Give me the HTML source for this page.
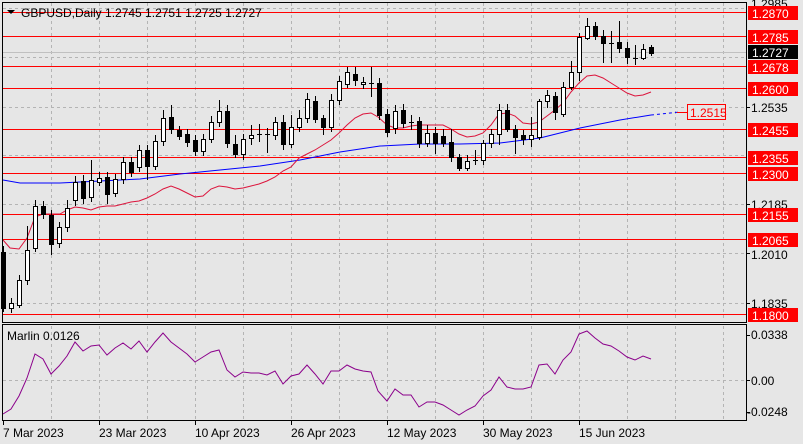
<!DOCTYPE html>
<html><head><meta charset="utf-8"><style>
html,body{margin:0;padding:0;background:#e6e6e6;width:803px;height:444px;overflow:hidden}
svg{display:block;font-family:"Liberation Sans",sans-serif}
</style></head><body>
<svg width="803" height="444" viewBox="0 0 803 444" xmlns="http://www.w3.org/2000/svg">
<rect width="803" height="444" fill="#e6e6e6"/>
<g stroke="#b4b4b4" stroke-dasharray="3,3" stroke-width="1">
<path d="M51.5 3V320M99.5 3V320M147.5 3V320M195.5 3V320M243.5 3V320M291.5 3V320M339.5 3V320M387.5 3V320M435.5 3V320M483.5 3V320M531.5 3V320M579.5 3V320M627.5 3V320M675.5 3V320M723.5 3V320"/>
<path d="M51.5 326V420M99.5 326V420M147.5 326V420M195.5 326V420M243.5 326V420M291.5 326V420M339.5 326V420M387.5 326V420M435.5 326V420M483.5 326V420M531.5 326V420M579.5 326V420M627.5 326V420M675.5 326V420M723.5 326V420"/>
<path d="M3 8.5H746M3 57.5H746M3 107.5H746M3 155.5H746M3 204.5H746M3 253.5H746M3 303.5H746M3 380.5H746"/>
</g>
<line x1="3" y1="52.5" x2="746" y2="52.5" stroke="#c0c0c0"/>
<g stroke="#ff0000" stroke-width="1">
<path d="M3 12.5H746M3 36.5H746M3 66.5H746M3 88.5H746M3 129.5H746M3 157.5H746M3 173.5H746M3 214.5H746M3 239.5H746M3 314.5H746"/>
</g>
<polyline fill="none" stroke="#0000ff" stroke-width="1" points="3,180 20,183 60,183 100,181 140,179 180,174 220,170 260,166 300,160 340,152 380,146 420,144 460,144 500,143 540,138 580,128 620,120 651,115"/>
<polyline fill="none" stroke="#0000ff" stroke-width="1" stroke-dasharray="3,3" points="651,115 680,112"/>
<polyline fill="none" stroke="#dc143c" stroke-width="1" points="3,240 10,248 19,249 27,238 35,217 43,214 51,214 60,214 67,210 75,207 83,208 91,210 99,207 107,206 115,206 123,204 131,202 139,201 147,198 155,194 163,189 171,186 179,189 187,193 195,197 203,196 211,189 219,186 227,187 235,189 243,188 251,186 259,184 267,181 275,177 283,171 291,167 299,158 307,154 315,150 323,145 331,140 339,133 347,125 355,118 363,114 371,113 378,117 387,125 395,128 403,128 411,126 419,125 427,125 435,125 443,125 451,129 459,134 467,137 475,136 483,133 491,125 499,114 507,113 515,116 523,123 531,124 539,122 547,116 555,110 563,103 571,92 579,83 587,76 595,75 603,78 611,83 619,88 627,93 635,96 643,95 651,92"/>
<g stroke="#000" stroke-width="1">
<path d="M3.5 246V312M11.5 298V313M19.5 275V308M27.5 226V285M35.5 200V252M43.5 201V219M51.5 210V255M59.5 222V248M67.5 200V232M75.5 176V206M83.5 175V204M91.5 160V202M99.5 172V186M107.5 172V204M115.5 174V197M123.5 157V184M131.5 157V177M139.5 145V172M147.5 145V180M155.5 135V170M163.5 110V146M171.5 105V134M179.5 126V140M187.5 129V147M195.5 135V156M203.5 134V156M211.5 116V143M219.5 100V127M227.5 105V148M235.5 135V158M243.5 134V160M251.5 125V145M259.5 124V142M267.5 128V153M275.5 117V140M283.5 115V150M291.5 115V148M299.5 110V132M307.5 93V123M315.5 96V123M323.5 115V135M331.5 94V132M339.5 76V105M347.5 67V88M355.5 67V86M363.5 77V89M371.5 67V97M379.5 78V120M387.5 109V137M395.5 105V134"/>
<path d="M403.5 104V128M411.5 115V130M419.5 117V148M427.5 125V147M435.5 127V154M443.5 129V147M451.5 129V162M459.5 154V171M467.5 155V171M475.5 150V165M483.5 140V165M491.5 129V148M499.5 104V145M507.5 104V132M515.5 125V154M523.5 130V145M531.5 117V147M539.5 99V140M547.5 90V108M555.5 92V120M563.5 82V117M571.5 61V90M579.5 33V81M587.5 18V40M595.5 22V40M603.5 30V63M611.5 31V63M619.5 21V53M627.5 42V64M635.5 45V65M643.5 44V60M651.5 45V56"/>
<path d="M257 134.5H262M265 134.5H270M369 83.5H374M409 122.5H414M473 160.5H478M609 43.5H614M633 58.5H638"/>
<g fill="#000">
<rect x="1.5" y="252.5" width="4" height="56"/>
<rect x="41.5" y="206.5" width="4" height="8"/>
<rect x="49.5" y="215.5" width="4" height="29"/>
<rect x="81.5" y="181.5" width="4" height="17"/>
<rect x="105.5" y="177.5" width="4" height="17"/>
<rect x="129.5" y="162.5" width="4" height="10"/>
<rect x="145.5" y="150.5" width="4" height="16"/>
<rect x="169.5" y="117.5" width="4" height="12"/>
<rect x="177.5" y="130.5" width="4" height="6"/>
<rect x="185.5" y="134.5" width="4" height="8"/>
<rect x="193.5" y="140.5" width="4" height="11"/>
<rect x="225.5" y="111.5" width="4" height="32"/>
<rect x="233.5" y="144.5" width="4" height="10"/>
<rect x="281.5" y="122.5" width="4" height="22"/>
<rect x="313.5" y="101.5" width="4" height="18"/>
<rect x="321.5" y="118.5" width="4" height="9"/>
<rect x="353.5" y="74.5" width="4" height="6"/>
<rect x="377.5" y="83.5" width="4" height="32"/>
<rect x="385.5" y="114.5" width="4" height="18"/>
<rect x="401.5" y="110.5" width="4" height="13"/>
<rect x="417.5" y="121.5" width="4" height="22"/>
<rect x="433.5" y="133.5" width="4" height="10"/>
<rect x="441.5" y="136.5" width="4" height="7"/>
<rect x="449.5" y="142.5" width="4" height="15"/>
<rect x="457.5" y="157.5" width="4" height="11"/>
<rect x="505.5" y="110.5" width="4" height="19"/>
<rect x="513.5" y="129.5" width="4" height="8"/>
<rect x="521.5" y="135.5" width="4" height="4"/>
<rect x="553.5" y="96.5" width="4" height="16"/>
<rect x="593.5" y="26.5" width="4" height="10"/>
<rect x="601.5" y="36.5" width="4" height="7"/>
<rect x="617.5" y="42.5" width="4" height="6"/>
<rect x="625.5" y="48.5" width="4" height="9"/>
<rect x="649.5" y="47.5" width="4" height="6"/>
</g>
<g fill="#fff">
<rect x="9.5" y="303.5" width="4" height="5"/>
<rect x="17.5" y="280.5" width="4" height="25"/>
<rect x="25.5" y="250.5" width="4" height="30"/>
<rect x="33.5" y="206.5" width="4" height="42"/>
<rect x="57.5" y="227.5" width="4" height="16"/>
<rect x="65.5" y="208.5" width="4" height="19"/>
<rect x="73.5" y="182.5" width="4" height="18"/>
<rect x="89.5" y="180.5" width="4" height="17"/>
<rect x="97.5" y="178.5" width="4" height="4"/>
<rect x="113.5" y="179.5" width="4" height="14"/>
<rect x="121.5" y="162.5" width="4" height="17"/>
<rect x="137.5" y="150.5" width="4" height="17"/>
<rect x="153.5" y="141.5" width="4" height="25"/>
<rect x="161.5" y="118.5" width="4" height="23"/>
<rect x="201.5" y="139.5" width="4" height="12"/>
<rect x="209.5" y="122.5" width="4" height="17"/>
<rect x="217.5" y="111.5" width="4" height="11"/>
<rect x="241.5" y="139.5" width="4" height="15"/>
<rect x="249.5" y="135.5" width="4" height="3"/>
<rect x="273.5" y="122.5" width="4" height="13"/>
<rect x="289.5" y="127.5" width="4" height="17"/>
<rect x="297.5" y="118.5" width="4" height="9"/>
<rect x="305.5" y="99.5" width="4" height="19"/>
<rect x="329.5" y="100.5" width="4" height="27"/>
<rect x="337.5" y="81.5" width="4" height="19"/>
<rect x="345.5" y="72.5" width="4" height="12"/>
<rect x="361.5" y="82.5" width="4" height="2"/>
<rect x="393.5" y="111.5" width="4" height="17"/>
<rect x="425.5" y="133.5" width="4" height="10"/>
<rect x="465.5" y="161.5" width="4" height="7"/>
<rect x="481.5" y="143.5" width="4" height="17"/>
<rect x="489.5" y="134.5" width="4" height="9"/>
<rect x="497.5" y="110.5" width="4" height="24"/>
<rect x="529.5" y="135.5" width="4" height="4"/>
<rect x="537.5" y="101.5" width="4" height="36"/>
<rect x="545.5" y="95.5" width="4" height="6"/>
<rect x="561.5" y="87.5" width="4" height="27"/>
<rect x="569.5" y="72.5" width="4" height="15"/>
<rect x="577.5" y="37.5" width="4" height="35"/>
<rect x="585.5" y="26.5" width="4" height="12"/>
<rect x="641.5" y="49.5" width="4" height="9"/>
</g>
</g>
<line x1="677" y1="112.5" x2="687" y2="112.5" stroke="#ff0000"/>
<rect x="687.5" y="104.5" width="38" height="15" fill="#e6e6e6" stroke="#ff0000"/>
<text x="690" y="117" font-size="12" fill="#ff0000">1.2515</text>
<path d="M7 10H15L11 14Z" fill="#000"/>
<text x="21" y="17" font-size="12" fill="#000">GBPUSD,Daily  1.2745 1.2751 1.2725 1.2727</text>
<rect x="2.5" y="2.5" width="744" height="320" fill="none" stroke="#000"/>
<rect x="2.5" y="324.5" width="744" height="96" fill="none" stroke="#000"/>
<polyline fill="none" stroke="#8b008b" stroke-width="1" points="3,414 11,409 19,396 27,378 35,354 43,359 51,374 59,366 67,356 75,342 83,351 91,346 99,345 107,355 115,348 123,343 131,349 139,341 147,352 155,342 163,333 171,342 179,348 187,354 195,362 203,357 211,352 219,350 227,370 235,377 243,372 251,373 259,373 267,375 275,371 283,384 291,376 299,374 307,365 315,374 323,384 331,371 339,371 347,365 355,369 363,371 371,372 378,391 387,401 395,389 403,395 411,395 419,407 427,402 435,402 443,405 451,410 459,415 467,410 475,406 483,396 491,390 499,377 507,387 515,389 523,389 531,387 539,365 547,364 555,374 563,360 571,352 579,334 587,331 595,338 603,344 611,346 619,351 627,357 635,360 643,356 651,359"/>
<text x="7" y="340" font-size="12" fill="#000">Marlin 0.0126</text>
<g font-size="12">
<text x="751" y="8" fill="#000">1.2985</text>
<text x="751" y="112" fill="#000">1.2535</text>
<text x="751" y="209" fill="#000">1.2185</text>
<text x="751" y="259" fill="#000">1.2010</text>
<text x="751" y="308" fill="#000">1.1835</text>
<path stroke="#000" d="M747 107.5H750M747 204.5H750M747 253.5H750M747 303.5H750M747 335.5H750M747 380.5H750M747 412.5H750"/>
<g fill="#ff0000">
<rect x="748" y="6" width="50" height="14"/><rect x="748" y="30" width="50" height="14"/>
<rect x="748" y="60" width="50" height="14"/><rect x="748" y="82" width="50" height="14"/>
<rect x="748" y="123" width="50" height="14"/><rect x="748" y="151" width="50" height="14"/>
<rect x="748" y="167" width="50" height="14"/><rect x="748" y="208" width="50" height="14"/>
<rect x="748" y="233" width="50" height="14"/><rect x="748" y="308" width="50" height="14"/>
</g>
<rect x="748" y="45" width="50" height="14" fill="#000"/>
<g fill="#fff">
<text x="752" y="18">1.2870</text><text x="752" y="42">1.2785</text>
<text x="752" y="57">1.2727</text>
<text x="752" y="72">1.2678</text><text x="752" y="94">1.2600</text>
<text x="752" y="135">1.2455</text><text x="752" y="163">1.2355</text>
<text x="752" y="179">1.2300</text><text x="752" y="220">1.2155</text>
<text x="752" y="245">1.2065</text><text x="752" y="320">1.1800</text>
</g>
<text x="751" y="339" fill="#000">0.0338</text>
<text x="751" y="385" fill="#000">0.00</text>
<text x="747" y="416" fill="#000">-0.0248</text>
</g>
<path stroke="#000" d="M3.5 421V425M99.5 421V425M195.5 421V425M291.5 421V425M387.5 421V425M483.5 421V425M579.5 421V425"/>
<g font-size="12" fill="#000">
<text x="3" y="437">7 Mar 2023</text>
<text x="99" y="437">23 Mar 2023</text>
<text x="195" y="437">10 Apr 2023</text>
<text x="291" y="437">26 Apr 2023</text>
<text x="387" y="437">12 May 2023</text>
<text x="483" y="437">30 May 2023</text>
<text x="579" y="437">15 Jun 2023</text>
</g>
</svg>
</body></html>
